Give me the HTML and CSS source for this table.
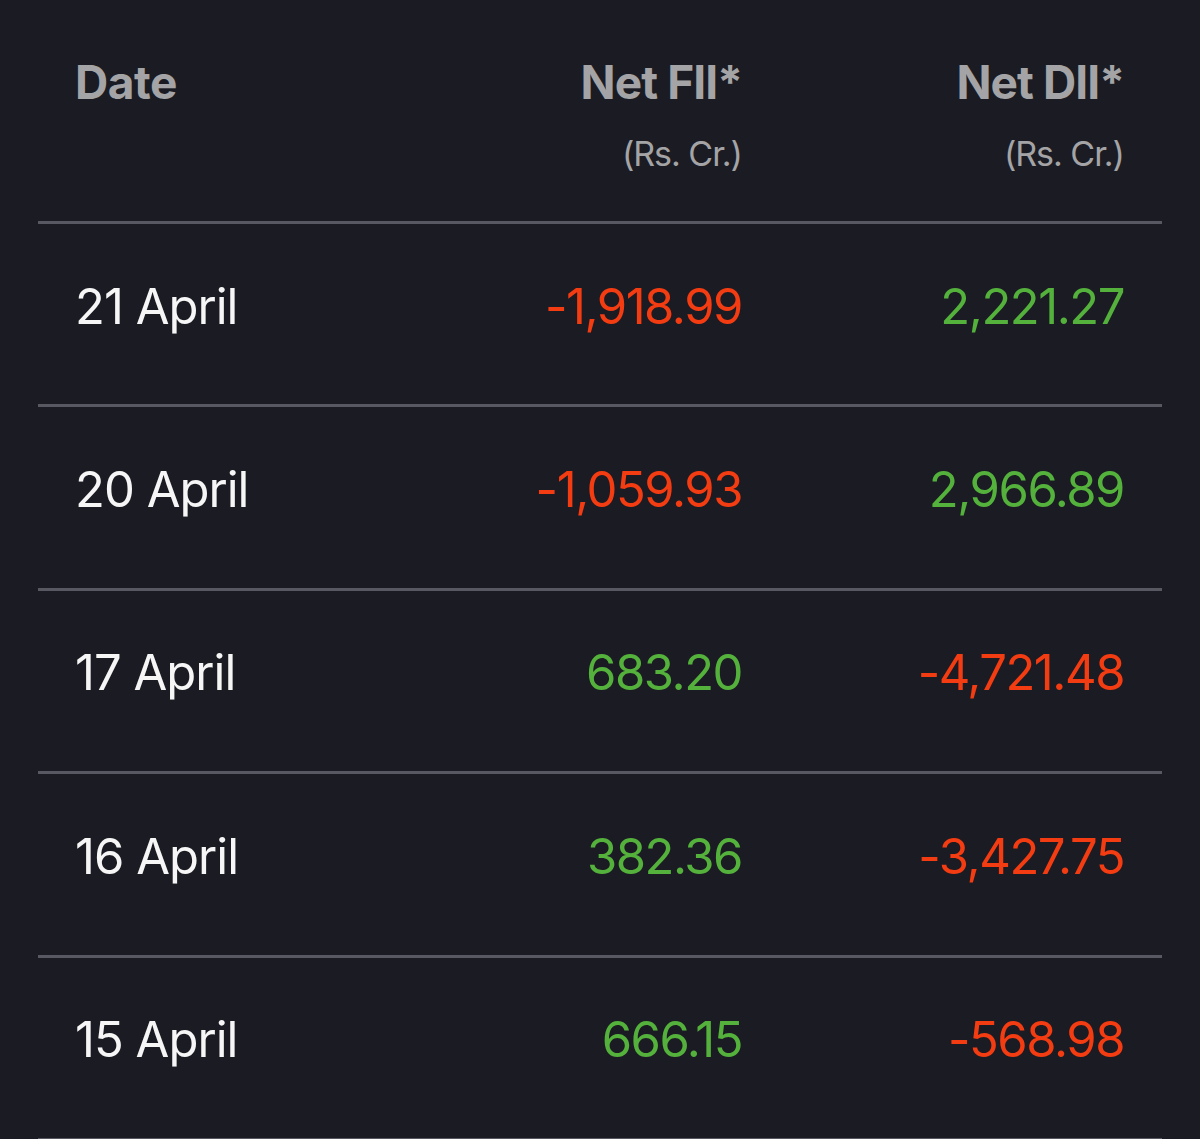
FILE: index.html
```html
<!DOCTYPE html>
<html>
<head>
<meta charset="utf-8">
<link rel="stylesheet" href="styles.css">
</head>
<body>
<div class="table">
  <div class="row head">
    <div class="cell date-h">Date</div>
    <div class="cell num-h"><span class="h-title">Net FII*</span><span class="h-unit">(Rs. Cr.)</span></div>
    <div class="cell num-h"><span class="h-title">Net DII*</span><span class="h-unit">(Rs. Cr.)</span></div>
  </div>
  <div class="row">
    <div class="cell date">21 April</div>
    <div class="cell num neg">-1,918.99</div>
    <div class="cell num pos">2,221.27</div>
  </div>
  <div class="row">
    <div class="cell date">20 April</div>
    <div class="cell num neg">-1,059.93</div>
    <div class="cell num pos">2,966.89</div>
  </div>
  <div class="row">
    <div class="cell date">17 April</div>
    <div class="cell num pos">683.20</div>
    <div class="cell num neg">-4,721.48</div>
  </div>
  <div class="row">
    <div class="cell date">16 April</div>
    <div class="cell num pos">382.36</div>
    <div class="cell num neg">-3,427.75</div>
  </div>
  <div class="row">
    <div class="cell date">15 April</div>
    <div class="cell num pos">666.15</div>
    <div class="cell num neg">-568.98</div>
  </div>
</div>
</body>
</html>
```
FILE: styles.css
```css
html, body {
  margin: 0;
  padding: 0;
  background: #1b1c23;
}
body {
  font-family: Inter, "Noto Sans", "DejaVu Sans", sans-serif;
  color: #f4f4f4;
  overflow: hidden;
}
.table {
  margin: 0 38px;
  width: 1124px;
}
.row {
  display: grid;
  grid-template-columns: 1fr 382px 382px;
  padding: 0 38px 0 37px;
  height: 180.4px;
  align-items: center;
  border-bottom: 3px solid #585862;
}
.row.head {
  height: 221px;
  align-items: start;
}
.date-h {
  font-size: 46px;
  font-weight: 700;
  color: #a4a4a6;
  padding-top: 59px;
  line-height: 1;
  letter-spacing: -0.01em;
}
.num-h {
  display: flex;
  flex-direction: column;
  align-items: flex-end;
  padding-top: 59px;
}
.h-title {
  font-size: 46px;
  font-weight: 700;
  color: #a4a4a6;
  line-height: 1;
  letter-spacing: -0.02em;
}
.h-unit {
  font-size: 34px;
  font-weight: 400;
  color: #a4a4a6;
  margin-top: 32px;
  line-height: 1;
  letter-spacing: -0.03em;
}
.date {
  font-size: 49px;
  color: #f6f6f6;
  padding-bottom: 16px;
  letter-spacing: -0.02em;
}
.num {
  font-size: 49px;
  text-align: right;
  padding-bottom: 16px;
  letter-spacing: -0.03em;
}
.neg { color: #f43c12; }
.pos { color: #54b13c; }
```
